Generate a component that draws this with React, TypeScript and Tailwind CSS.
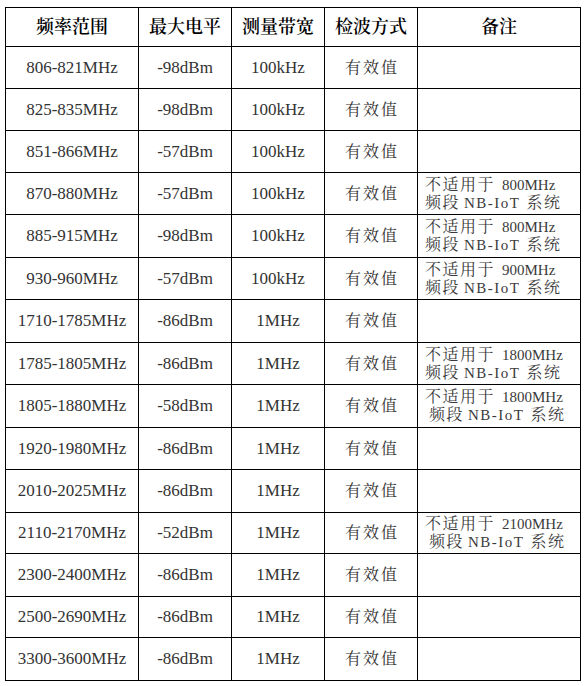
import React from "react";

type Row = {
  freq: string;
  level: string;
  bw: string;
  remark?: { band: string; indent?: boolean };
};

const rows: Row[] = [
  { freq: "806-821MHz", level: "-98dBm", bw: "100kHz" },
  { freq: "825-835MHz", level: "-98dBm", bw: "100kHz" },
  { freq: "851-866MHz", level: "-57dBm", bw: "100kHz" },
  { freq: "870-880MHz", level: "-57dBm", bw: "100kHz", remark: { band: "800MHz" } },
  { freq: "885-915MHz", level: "-98dBm", bw: "100kHz", remark: { band: "800MHz" } },
  { freq: "930-960MHz", level: "-57dBm", bw: "100kHz", remark: { band: "900MHz" } },
  { freq: "1710-1785MHz", level: "-86dBm", bw: "1MHz" },
  { freq: "1785-1805MHz", level: "-86dBm", bw: "1MHz", remark: { band: "1800MHz" } },
  { freq: "1805-1880MHz", level: "-58dBm", bw: "1MHz", remark: { band: "1800MHz", indent: true } },
  { freq: "1920-1980MHz", level: "-86dBm", bw: "1MHz" },
  { freq: "2010-2025MHz", level: "-86dBm", bw: "1MHz" },
  { freq: "2110-2170MHz", level: "-52dBm", bw: "1MHz", remark: { band: "2100MHz", indent: true } },
  { freq: "2300-2400MHz", level: "-86dBm", bw: "1MHz" },
  { freq: "2500-2690MHz", level: "-86dBm", bw: "1MHz" },
  { freq: "3300-3600MHz", level: "-86dBm", bw: "1MHz" },
];

const font = {
  fontFamily:
    '"Liberation Serif", "Noto Serif CJK SC", "Noto Sans CJK SC", serif',
};

function Remark({ band, indent }: { band: string; indent?: boolean }) {
  return (
    <div className="flex flex-col justify-center pl-[7px] text-[#3a3a3a] leading-[17px]">
      <div className="flex items-baseline whitespace-nowrap">
        <span className="text-[16px] tracking-[1.5px]">不适用于</span>
        <span className="ml-[7px] text-[15px]">{band}</span>
      </div>
      <div className={indent ? "flex items-baseline whitespace-nowrap pl-[4px]" : "flex items-baseline whitespace-nowrap"}>
        <span className="text-[16px] tracking-[1.5px]">频段</span>
        <span className="ml-[4px] text-[15px] tracking-[1.5px]">NB-IoT</span>
        <span className="ml-[6px] text-[16px] tracking-[1.5px]">系统</span>
      </div>
    </div>
  );
}

export default function App() {
  const cell = "bg-white flex items-center justify-center text-[#333] whitespace-nowrap";
  return (
    <div className="w-[587px] h-[686px] bg-white pt-[7px] pl-[5px]" style={font}>
      <div className="grid w-[576px] h-[674px] bg-black gap-px p-px grid-cols-[132px_92px_92px_92px_162px] grid-rows-[38px_41px_41px_41px_41px_42px_41px_42px_41px_42px_41px_42px_40px_42px_40px_42px]">
        <div className="bg-white flex items-center justify-center text-[18px] font-semibold text-black">频率范围</div>
        <div className="bg-white flex items-center justify-center text-[18px] font-semibold text-black">最大电平</div>
        <div className="bg-white flex items-center justify-center text-[18px] font-semibold text-black">测量带宽</div>
        <div className="bg-white flex items-center justify-center text-[18px] font-semibold text-black">检波方式</div>
        <div className="bg-white flex items-center justify-center text-[18px] font-semibold text-black">备注</div>
        {rows.map((r) => (
          <React.Fragment key={r.freq}>
            <div className={`${cell} text-[17px]`}>{r.freq}</div>
            <div className={`${cell} text-[17px]`}>{r.level}</div>
            <div className={`${cell} text-[17px]`}>{r.bw}</div>
            <div className={`${cell} text-[16px] tracking-[2px] pl-[2px]`}>有效值</div>
            <div className="bg-white flex">
              {r.remark ? <Remark band={r.remark.band} indent={r.remark.indent} /> : null}
            </div>
          </React.Fragment>
        ))}
      </div>
    </div>
  );
}
